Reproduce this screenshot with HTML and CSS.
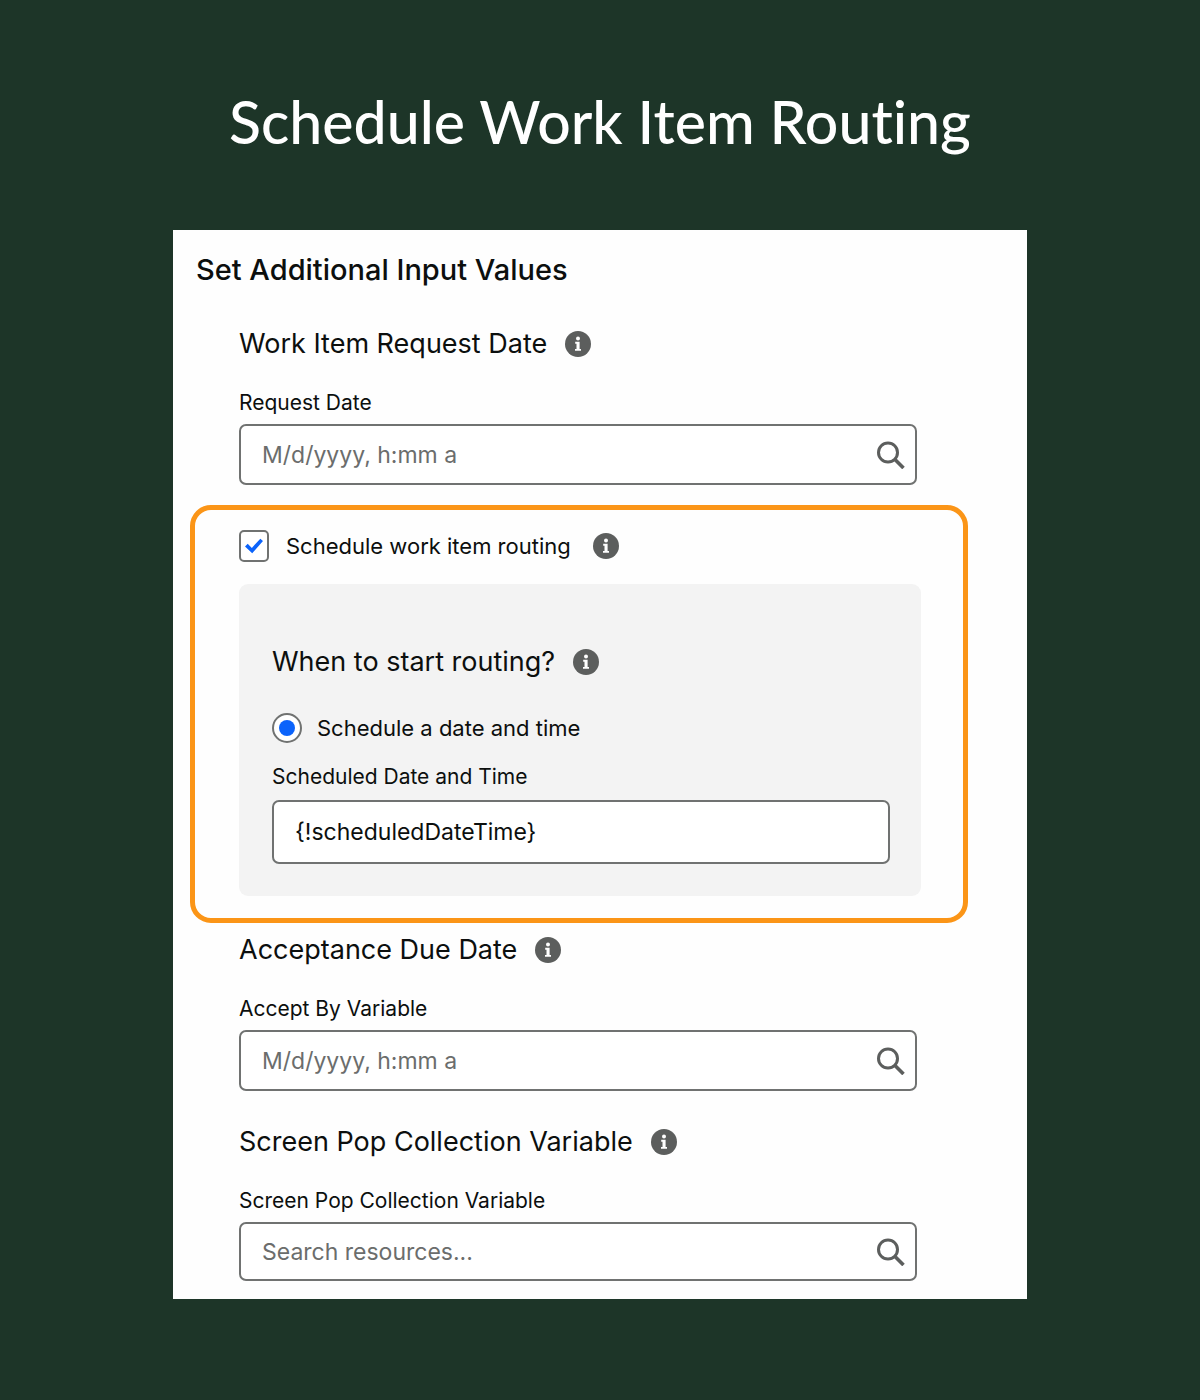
FILE: index.html
```html
<!doctype html>
<html lang="en">
  <head>
    <meta charset="UTF-8" />
    <meta name="viewport" content="width=device-width, initial-scale=1.0" />
    <title>Schedule Work Item Routing</title>
    <link rel="stylesheet" href="styles.css">
  </head>
  <body>
    <!-- Shared icons -->
    <svg class="sprite" aria-hidden="true">
      <symbol id="icon-info" viewBox="0 0 26 26">
        <circle cx="13" cy="13" r="13" fill="#5c5e5d" />
        <circle cx="13" cy="7.4" r="2" fill="#fff" />
        <path d="M10.2 10.8h4.4v7.2h1.4v1.8h-6V18h1.5v-5.3h-1.3z" fill="#fff" />
      </symbol>
      <symbol id="icon-search" viewBox="0 0 28 28">
        <circle cx="11" cy="11.5" r="9.5" fill="none" stroke="#5c5e5d" stroke-width="3" />
        <path d="M17.5 18l9 9" fill="none" stroke="#5c5e5d" stroke-width="3.6" />
      </symbol>
    </svg>

    <h1>Schedule Work Item Routing</h1>

    <form class="card">
      <h2>Set Additional Input Values</h2>

      <section class="section">
        <div class="heading">
          <h3>Work Item Request Date</h3>
          <button type="button" class="info" aria-label="Work Item Request Date help"><svg><use href="#icon-info" /></svg></button>
        </div>
        <label class="field-label" for="request-date">Request Date</label>
        <div class="field">
          <input type="text" id="request-date" placeholder="M/d/yyyy, h:mm a" />
          <svg class="search"><use href="#icon-search" /></svg>
        </div>
      </section>

      <section class="highlight">
        <div class="option">
          <input type="checkbox" id="schedule-routing" checked />
          <label for="schedule-routing">Schedule work item routing</label>
          <button type="button" class="info" aria-label="Schedule work item routing help"><svg><use href="#icon-info" /></svg></button>
        </div>
        <div class="panel">
          <div class="heading">
            <h3>When to start routing?</h3>
            <button type="button" class="info" aria-label="When to start routing help"><svg><use href="#icon-info" /></svg></button>
          </div>
          <div class="option">
            <input type="radio" name="start" id="start-date" checked />
            <label for="start-date">Schedule a date and time</label>
          </div>
          <label class="field-label" for="scheduled-date">Scheduled Date and Time</label>
          <div class="field">
            <input type="text" id="scheduled-date" value="{!scheduledDateTime}" />
          </div>
        </div>
      </section>

      <section class="section">
        <div class="heading">
          <h3>Acceptance Due Date</h3>
          <button type="button" class="info" aria-label="Acceptance Due Date help"><svg><use href="#icon-info" /></svg></button>
        </div>
        <label class="field-label" for="accept-by">Accept By Variable</label>
        <div class="field">
          <input type="text" id="accept-by" placeholder="M/d/yyyy, h:mm a" />
          <svg class="search"><use href="#icon-search" /></svg>
        </div>
      </section>

      <section class="section section-last">
        <div class="heading">
          <h3>Screen Pop Collection Variable</h3>
          <button type="button" class="info" aria-label="Screen Pop Collection Variable help"><svg><use href="#icon-info" /></svg></button>
        </div>
        <label class="field-label" for="screen-pop">Screen Pop Collection Variable</label>
        <div class="field">
          <input type="text" id="screen-pop" placeholder="Search resources..." />
          <svg class="search"><use href="#icon-search" /></svg>
        </div>
      </section>
    </form>
  </body>
</html>
```
FILE: styles.css
```css
* {
  box-sizing: border-box;
}
body {
  margin: 0;
  padding: 82px 24px 101px;
  background-color: #1d3528;
  color: #0c0f0e;
  font-family: Inter, 'Liberation Sans', sans-serif;
}
.sprite {
  display: none;
}
h1 {
  margin: 0 0 68px;
  color: #fff;
  font-family: Lato, 'Open Sans', sans-serif;
  font-size: 59px;
  font-weight: 500;
  font-variant-ligatures: none;
  line-height: 80px;
  text-align: center;
}
.card {
  max-width: 854px;
  margin: 0 auto;
  padding: 20px 59px 18px 17px;
  background-color: #fefefe;
}
h2 {
  margin: 0 0 34px;
  padding-left: 6px;
  font-size: 29px;
  font-weight: 500;
  line-height: 40px;
}
.section {
  padding: 0 51px 0 49px;
}
.section-last {
  margin-top: 31px;
}
.heading {
  display: flex;
  align-items: center;
  gap: 18px;
  margin-bottom: 25px;
}
h3 {
  margin: 0;
  font-size: 27px;
  font-weight: 400;
  line-height: 40px;
}
.info {
  flex: none;
  width: 26px;
  height: 26px;
  padding: 0;
  border: none;
  background: none;
  cursor: pointer;
}
.info svg {
  display: block;
  width: 26px;
  height: 26px;
}
.field-label {
  display: block;
  margin-bottom: 7px;
  font-size: 21px;
  line-height: 28px;
}
.field {
  display: flex;
  align-items: center;
  height: 61px;
  padding: 0 10px 0 21px;
  border: 2px solid #707271;
  border-radius: 7px;
  background-color: #fff;
}
.field input {
  flex: 1;
  min-width: 0;
  padding: 0;
  border: none;
  outline: none;
  background: none;
  color: inherit;
  font-family: inherit;
  font-size: 23px;
}
.field input::placeholder {
  color: #6b6d6c;
  opacity: 1;
}
.section-last .field {
  height: 59px;
}
.search {
  flex: none;
  width: 28px;
  height: 28px;
}
.highlight {
  margin: 20px 0 7px;
  padding: 20px 42px 22px 44px;
  border: 5px solid #fb9517;
  border-radius: 21px;
}
.option {
  display: flex;
  align-items: center;
  height: 32px;
  font-size: 22px;
}
.option input {
  display: grid;
  place-items: center;
  flex: none;
  width: 30px;
  height: 32px;
  margin: 0 17px 0 0;
  border: 2px solid #707271;
  background-color: #fff;
  appearance: none;
}
.option .info {
  margin-left: 22px;
}
input[type='checkbox'] {
  border-radius: 5px;
}
input[type='checkbox']:checked::before {
  content: '';
  width: 18px;
  height: 16px;
  background-color: #0b63fb;
  clip-path: polygon(0 53%, 15% 36%, 38% 62%, 85% 4%, 100% 19%, 40% 96%);
}
.option input[type='radio'] {
  height: 30px;
  margin-right: 15px;
  border-radius: 50%;
}
input[type='radio']:checked::before {
  content: '';
  width: 16px;
  height: 16px;
  border-radius: 50%;
  background-color: #0b63fb;
}
.panel {
  margin-top: 22px;
  padding: 58px 31px 32px 33px;
  border-radius: 9px;
  background-color: #f3f3f3;
}
.panel .heading {
  margin-bottom: 30px;
}
.panel .option {
  margin-bottom: 19px;
}
.panel .field-label {
  margin-bottom: 9px;
}
.panel .field {
  height: 64px;
}
```
